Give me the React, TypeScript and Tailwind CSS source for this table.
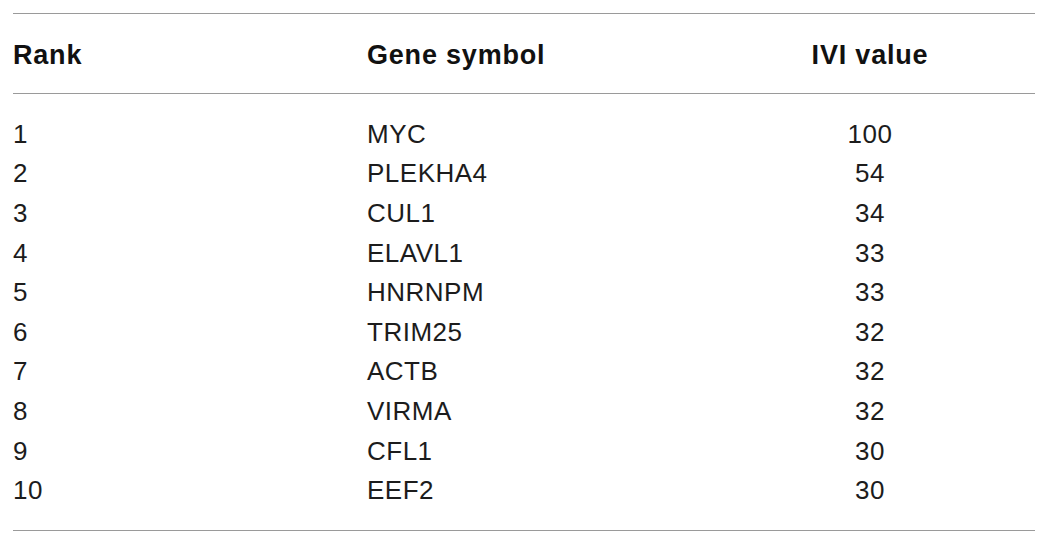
const rows: [number, string, number][] = [
  [1, "MYC", 100],
  [2, "PLEKHA4", 54],
  [3, "CUL1", 34],
  [4, "ELAVL1", 33],
  [5, "HNRNPM", 33],
  [6, "TRIM25", 32],
  [7, "ACTB", 32],
  [8, "VIRMA", 32],
  [9, "CFL1", 30],
  [10, "EEF2", 30],
];

export default function App() {
  return (
    <div className="h-[548px] w-[1051px] bg-white pt-[13px] pl-[13px] font-['Liberation_Sans',Arial,sans-serif] text-[#1c1c1c]">
      <div className="w-[1022px] border-t-[1.5px] border-b-[1.5px] border-[#9a9a9a]">
        {/* header */}
        <div className="grid h-[80px] grid-cols-[354px_338px_330px] items-center border-b-[1.5px] border-[#9a9a9a] pt-[4px] text-[27px] font-bold tracking-[0.8px] text-[#111]">
          <span>Rank</span>
          <span>Gene symbol</span>
          <span className="text-center">IVI value</span>
        </div>

        {/* body */}
        <div className="py-[20px]">
          {rows.map(([rank, gene, ivi]) => (
            <div
              key={rank}
              className="grid h-[39.6px] grid-cols-[354px_338px_330px] items-center text-[26px] leading-none tracking-[0.5px]"
            >
              <span>{rank}</span>
              <span>{gene}</span>
              <span className="text-center">{ivi}</span>
            </div>
          ))}
        </div>
      </div>
    </div>
  );
}
